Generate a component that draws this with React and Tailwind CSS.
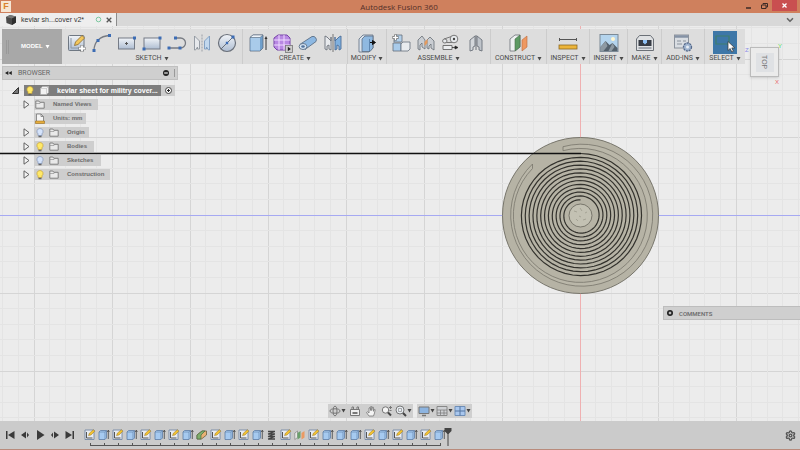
import { Fragment } from 'react'
import { ChevronDown, Settings } from 'lucide-react'

const BLUE = '#3c6cb4'

// ---------- toolbar glyphs, all on a 20x20 grid ----------
const GLYPHS = {
  newSketch: (
    <>
      <rect x="1.5" y="2.500" width="15.500" height="15" rx="1" fill="url(#metal)" stroke="#6f7883" />
      <path d="M4 5v10h8" fill="none" stroke="#8a96a6" />
      <path d="M7.500 12.500l1-3.500 6.500-6.500 2.600 2.500-6.600 6.500z" fill="#f3c75c" stroke="#8a6a2c" strokeWidth=".8" />
      <path d="M15 12v7M11.500 15.500h7" stroke="#777" strokeWidth="3" />
      <path d="M15 12.500v6M12 15.500h6" stroke="#fff" strokeWidth="1.800" />
    </>
  ),
  arc: (
    <>
      <path d="M2 17.500C2 9 8 3 17.500 2.500" fill="none" stroke="#777b82" strokeWidth="1.300" />
      <path d="M.5 16h3v3h-3zM4.500 6h3v3h-3zM16 1h3v3h-3z" fill={BLUE} />
    </>
  ),
  centerRect: (
    <>
      <rect x="1.500" y="5" width="16" height="11" fill="url(#metal)" stroke="#757b86" />
      <path d="M9.500 9v3M8 10.500h3" stroke="#555" />
      <path d="M16 3.500h3v3h-3z" fill={BLUE} />
    </>
  ),
  rect: (
    <>
      <rect x="2" y="5" width="16" height="11" fill="url(#metal)" stroke="#757b86" />
      <path d="M16.500 3.500h3v3h-3zM.5 14.500h3v3h-3z" fill={BLUE} />
    </>
  ),
  slot: (
    <>
      <path d="M9 5h4.500a4.800 4.800 0 010 10H2" fill="none" stroke="#777b82" strokeWidth="1.300" />
      <path d="M7 3.500h3v3H7zM.5 13.500h3v3h-3zM11.500 13.500h3v3h-3z" fill={BLUE} />
    </>
  ),
  mirrorSketch: (
    <>
      <path d="M2.500 3l5 5v8H5.500v-2l-2 3h-1z" fill="#e7e9ec" stroke="#8f959d" strokeWidth=".9" />
      <path d="M17.500 3l-5 5v8h2v-2l2 3h1z" fill="#c2d8ee" stroke="#7d9cc0" strokeWidth=".9" />
      <path d="M10 1.500v17" stroke="#9a9fa6" strokeDasharray="2 1" />
    </>
  ),
  circle: (
    <>
      <circle cx="10" cy="10" r="8.500" fill="url(#metal)" stroke="#6a707a" strokeWidth="1.200" />
      <path d="M4 16L16 4" stroke="#6a707a" />
      <path d="M14.500 2.500h3v3h-3zM8.800 8.800h2.400v2.400H8.800z" fill={BLUE} />
    </>
  ),
  extrude: (
    <>
      <path d="M2 4.500L5 2h10v13l-3 3H2z" fill="#6f9fcb" stroke="#5d6d80" strokeWidth=".8" />
      <path d="M2 4.500L5 2h10l-3 2.500z" fill="#eef3f8" stroke="#5d6d80" strokeWidth=".6" />
      <path d="M2.500 5h9.500v12.500H2.500z" fill="#a9cbea" />
      <path d="M18 17V5" stroke="#333" />
      <path d="M16.500 6L18 3l1.500 3z" fill="#333" />
    </>
  ),
  form: (
    <>
      <path d="M5 2h9l3 3v9l-3 3H4l-3-3V5z" fill="#b888e2" stroke="#7645a8" />
      <path d="M1 7h16M1 12h16M6 2v15M11 2v15" stroke="#efdcff" strokeWidth="1" />
      <rect x="12.500" y="12.500" width="7" height="7" fill="#ccc" stroke="#777" strokeWidth=".8" />
      <path d="M14.800 13.800l3 2.200-3 2.200z" fill="#222" />
    </>
  ),
  pipe: (
    <>
      <path d="M2.500 11L14 3.500a3.500 3.500 0 014 5L7 16.500z" fill="#8db8e2" stroke="#5c6f86" strokeWidth=".9" />
      <ellipse cx="5" cy="13.500" rx="3.900" ry="3" fill="#d6e5f4" stroke="#5c6f86" strokeWidth=".9" />
      <ellipse cx="5" cy="13.500" rx="1.800" ry="1.200" fill="#53739b" />
    </>
  ),
  mirror: (
    <>
      <path d="M2 3l2 1 4 4V4v13l-2-1v-4l-2 1v4l-2-1z" fill="#e8eaed" stroke="#6c727a" strokeWidth=".9" />
      <path d="M18 3l-2 1-4 4V4v13l2-1v-4l2 1v4l2-1z" fill="#7fb0df" stroke="#4c6e97" strokeWidth=".9" />
      <path d="M10 1v18" stroke="#777" />
    </>
  ),
  pressPull: (
    <>
      <path d="M2 6l4-4h10v13l-4 4H2z" fill="#dbe4ee" stroke="#5d6d80" strokeWidth=".8" />
      <path d="M5 6l3-3h8v12l-3 3.500H5z" fill="#8fb9e1" stroke="#5d6d80" strokeWidth=".8" />
      <path d="M12.500 6v12" stroke="#5078a4" strokeWidth=".8" />
      <path d="M13 9.500h3M15.500 7.500l3 2-3 2z" fill="#111" stroke="#111" />
    </>
  ),
  newComponent: (
    <>
      <path d="M2 10h8v8H2z" fill="#a9cbea" stroke="#66707c" strokeWidth=".8" />
      <path d="M10 11l2-2h7v7l-2 2h-7z" fill="#e8ebee" stroke="#66707c" strokeWidth=".8" />
      <path d="M3 4l2-2h6v7H3z" fill="#b3d0ea" stroke="#66707c" strokeWidth=".8" />
      <path d="M4.500 1.500v6M1.500 4.500h6" stroke="#666" strokeWidth="2.800" />
      <path d="M4.500 2v5M2 4.500h5" stroke="#fff" strokeWidth="1.400" />
    </>
  ),
  joint: (
    <>
      <path d="M2 7l4-4 3 4v9l-3-2v-4l-2 2v5l-2-1z" fill="#c9cdd2" stroke="#686e76" strokeWidth=".8" />
      <path d="M11 7l3-3 4 4v9l-3-2v-4l-2 2v3l-2-1z" fill="#c9cdd2" stroke="#686e76" strokeWidth=".8" />
      <path d="M8.500 9l3-3v4l-3 3z" fill="#e59a5c" />
    </>
  ),
  motion: (
    <>
      <path d="M3 6l9-3M3 9.500h9" stroke="#777" strokeWidth="1" />
      <circle cx="13" cy="6" r="3.800" fill="#e8ebee" stroke="#777" />
      <circle cx="13" cy="6" r="1.200" fill="#444" />
      <ellipse cx="3.800" cy="8" rx="2.200" ry="2" fill="#e8ebee" stroke="#777" />
      <path d="M2 12.500h9v4H2z" fill="#eceef0" stroke="#666" strokeWidth=".9" />
      <path d="M11 14.500h3M14 13l3 1.500-3 1.500z" fill="#222" stroke="#222" strokeWidth=".7" />
    </>
  ),
  rigid: (
    <>
      <path d="M4 7l5-4v10l-2 1v3l-3 1z" fill="#d4d7db" stroke="#6c727a" strokeWidth=".9" />
      <path d="M16 7l-5-4v10l2 1v3l3 1z" fill="#bfc4ca" stroke="#6c727a" strokeWidth=".9" />
      <path d="M10 2v15" stroke="#6c727a" />
    </>
  ),
  construct: (
    <>
      <path d="M1 6l5-4h5v12l-5 4H1z" fill="#eef0f1" stroke="#6b7077" strokeWidth=".8" />
      <path d="M6 6l5-4v12l-5 4z" fill="#5d9a63" stroke="#476d4b" strokeWidth=".6" />
      <path d="M13 7l5-4v11l-5 4z" fill="#ee9861" stroke="#bd6a3a" strokeWidth=".6" />
    </>
  ),
  inspect: (
    <>
      <path d="M1.500 6.500h17M1.500 5v3M18.500 5v3" stroke="#555" />
      <rect x="1" y="12" width="18" height="4" fill="#ecb53a" stroke="#8f6a22" strokeWidth=".8" />
    </>
  ),
  insert: (
    <>
      <rect x="1" y="1.500" width="18" height="17" fill="#b4d4ed" stroke="#7c8a96" />
      <circle cx="14" cy="6" r="2" fill="#fff6cf" />
      <path d="M1.500 14l5-6 4 4 3-2 5 5v3h-17z" fill="#54616c" />
      <path d="M6.500 8l2 5-4 5h-3v-4zM13.500 10l2 4-3 4h-3z" fill="#8d99a2" />
    </>
  ),
  make: (
    <>
      <path d="M1.500 6l3-3.500h11l3 3.500v11.500h-17z" fill="#dfe1e3" stroke="#6b7077" />
      <rect x="3.500" y="7" width="13" height="6" fill="#363b44" />
      <path d="M8 7h4v2.500l-2 2-2-2z" fill="#8fc0f4" />
      <path d="M3.500 15h13" stroke="#8a9098" strokeWidth="1.400" />
    </>
  ),
  addins: (
    <>
      <rect x="1.500" y="2" width="14" height="13" fill="#d9dde2" stroke="#8b929c" />
      <path d="M2 3.500h13" stroke="#8592a5" strokeWidth="2.500" />
      <path d="M4 8h4M4 11h5M10 8h3" stroke="#8a929c" />
      <circle cx="14.500" cy="14" r="4" fill="#9fb4d0" stroke="#56698a" strokeWidth="1.300" strokeDasharray="2 .9" />
      <circle cx="14.500" cy="14" r="1.500" fill="#e8edf4" />
    </>
  ),
  select: (
    <>
      <path d="M1 3h13v8H1z" fill="none" stroke="#3f7f6d" strokeWidth="1.200" />
      <path d="M13 8.500v9l2.200-2 1.600 3.500 1.600-.8-1.600-3.300h3z" fill="#fff" stroke="#333" strokeWidth=".7" />
    </>
  ),
}

const GROUPS = [
  { label: 'SKETCH', width: 'w-[180px]', tools: ['newSketch', 'arc', 'centerRect', 'rect', 'slot', 'mirrorSketch', 'circle'] },
  { label: 'CREATE', width: 'w-[105px]', tools: ['extrude', 'form', 'pipe', 'mirror'] },
  { label: 'MODIFY', width: 'w-[39px]', tools: ['pressPull'] },
  { label: 'ASSEMBLE', width: 'w-[104px]', tools: ['newComponent', 'joint', 'motion', 'rigid'] },
  { label: 'CONSTRUCT', width: 'w-[56px]', tools: ['construct'] },
  { label: 'INSPECT', width: 'w-[43px]', tools: ['inspect'] },
  { label: 'INSERT', width: 'w-[38px]', tools: ['insert'] },
  { label: 'MAKE', width: 'w-[34px]', tools: ['make'] },
  { label: 'ADD-INS', width: 'w-[43px]', tools: ['addins'] },
  { label: 'SELECT', width: 'w-[41px]', tools: ['select'] },
]

const TREE = [
  { label: 'Named Views', width: 'w-16', arrow: true, icon: 'folder' },
  { label: 'Units: mm', width: 'w-[52px]', icon: 'units' },
  { label: 'Origin', width: 'w-[55px]', arrow: true, bulb: 'off', icon: 'folder' },
  { label: 'Bodies', width: 'w-[60px]', arrow: true, bulb: 'on', icon: 'folder' },
  { label: 'Sketches', width: 'w-[67px]', arrow: true, bulb: 'off', icon: 'folder' },
  { label: 'Construction', width: 'w-[76px]', arrow: true, bulb: 'on', icon: 'folder' },
]

// s = sketch, e = extrude, f = fillet, c = coil, p = plane
const FEATURES = 'sesesesefsesecspseeesesese'.split('')
const FEATURE_NAMES = { s: 'Sketch', e: 'Extrude', f: 'Fillet', c: 'Coil', p: 'Plane' }

function Caret() {
  return (
    <svg width="5" height="4" viewBox="0 0 5 4" className="shrink-0" aria-hidden="true">
      <path d="M.5 0h4L2.500 3.500z" fill="currentColor" />
    </svg>
  )
}

function TitleBar() {
  return (
    <header className="flex h-[13px] shrink-0 items-start bg-[#cf805d]">
      <div className="flex flex-1 pl-px pt-px">
        <span className="flex h-[11px] w-[10px] items-center justify-center bg-[#f6e6d4] text-[9px] font-bold leading-none text-[#d9822f]">F</span>
      </div>
      <h1 className="font-['Open_Sans','Noto_Sans',sans-serif] text-[8px] leading-[13px] text-[#54302a]">Autodesk Fusion 360</h1>
      <div className="flex flex-1 justify-end pr-[3px] text-[#3b2a26]">
        <button aria-label="Minimize" className="flex h-[11px] w-[15px] items-center justify-center">
          <svg width="5" height="9" viewBox="0 0 5 9"><path d="M0 7h5" stroke="currentColor" strokeWidth="1.500" /></svg>
        </button>
        <button aria-label="Restore" className="flex h-[11px] w-4 items-center justify-center">
          <svg width="7" height="6" viewBox="0 0 7 6"><path d="M2 1.500V.5h4.500v3.500H5M.5 2H5v3.500H.5z" fill="none" stroke="currentColor" /></svg>
        </button>
        <button aria-label="Close" className="flex h-[11px] w-[25px] items-center justify-center bg-[#c94f50] text-white">
          <svg width="5" height="5" viewBox="0 0 5 5"><path d="M.5.5l4 4M4.500.5l-4 4" stroke="currentColor" strokeWidth="1.300" /></svg>
        </button>
      </div>
    </header>
  )
}

function TabStrip() {
  return (
    <div className="flex h-[13px] shrink-0 justify-between bg-[#d8d8d8]">
      <div className="flex w-[117px] items-center border-r border-[#8c8c8c] bg-[#eeeeee] pl-1.5">
        <svg width="10" height="10" viewBox="0 0 10 10" aria-hidden="true">
          <path d="M0 2l4-2 6 1.500v6L6 10 .5 8z" fill="#4a4a4a" />
          <path d="M0 2l4-2 6 1.500L6 3.500z" fill="#777" />
          <path d="M6 3.500l4-2v6L6 10z" fill="#2f2f2f" />
        </svg>
        <span className="ml-[5px] w-[70px] whitespace-nowrap text-[7px] leading-[15px] text-[#333]">kevlar sh...cover v2*</span>
        <svg width="7" height="7" viewBox="0 0 7 7" className="ml-1" aria-hidden="true">
          <circle cx="3.500" cy="3.500" r="2.300" fill="none" stroke="#7cc8a0" />
        </svg>
        <button aria-label="Close tab" className="ml-1 text-[#555]">
          <svg width="6" height="6" viewBox="0 0 6 6"><path d="M.7.7l4.600 4.600M5.300.7L.7 5.300" stroke="currentColor" strokeWidth="1.300" /></svg>
        </button>
      </div>
      <button aria-label="More tabs" className="flex w-[19px] items-center pl-1 text-[#666]">
        <ChevronDown size={10} strokeWidth={4} />
      </button>
    </div>
  )
}

function Toolbar() {
  return (
    <div className="flex h-[35px] w-fit bg-[#dddddd]">
      <button className="flex w-[60px] items-center gap-[2px] bg-[#a8a8a8] text-[6px] font-bold text-white">
        <span className="ml-1 mr-2.5 h-3.5 w-[3px] border-x border-[#999]" />
        MODEL
        <Caret />
      </button>
      {GROUPS.map((g, i) => (
        <div key={g.label} className={`${g.width} ${i ? 'border-l border-[#cccccc]' : ''} flex flex-col items-center pt-[2px]`}>
          <div className="flex gap-px">
            {g.tools.map(t => (
              <button key={t} aria-label={t} className={`${t === 'select' ? 'bg-[#3e77a8]' : ''} flex h-[23px] w-6 items-center justify-center`}>
                <svg width="20" height="20" viewBox="0 0 20 20">{GLYPHS[t]}</svg>
              </button>
            ))}
          </div>
          <button className="flex items-center gap-[2px] whitespace-nowrap font-['Roboto',sans-serif] text-[7px] leading-[9px] text-[#4a4a4a]">
            {g.label}
            <Caret />
          </button>
        </div>
      ))}
    </div>
  )
}

function Bulb({ on }) {
  return (
    <svg width="8" height="10" viewBox="0 0 8 10" className="shrink-0" aria-hidden="true">
      <path d="M4 .5a3 3 0 00-2 5.300V7.500h4V5.800A3 3 0 004 .5z" fill={on ? '#ffe968' : '#d5e3fa'} stroke={on ? '#c9a535' : '#8296bd'} strokeWidth=".7" />
      <path d="M2.500 8.500h3" stroke="#666" strokeWidth="1.500" />
    </svg>
  )
}

function TreeIcon({ kind }) {
  if (kind === 'units') {
    return (
      <svg width="10" height="11" viewBox="0 0 10 11" className="shrink-0" aria-hidden="true">
        <path d="M1.500 9V1H6l2.500 2.500V9" fill="#f5f5f5" stroke="#777" strokeWidth=".8" />
        <path d="M6 1v2.500h2.500" fill="none" stroke="#777" strokeWidth=".8" />
        <path d="M.5 8h9v2.500h-9z" fill="#e6ad3c" stroke="#9a6e1e" strokeWidth=".6" />
      </svg>
    )
  }
  return (
    <svg width="10" height="9" viewBox="0 0 10 9" className="shrink-0" aria-hidden="true">
      <path d="M.8 8.200V1h3l1 1.300h4.400v5.900z" fill="#e9e9e9" stroke="#777" strokeWidth=".9" />
      <path d="M1 3.500h4l1-1" fill="none" stroke="#888" strokeWidth=".6" />
    </svg>
  )
}

function Browser() {
  return (
    <section className="mt-[2px] text-[6px] font-bold text-[#6c6c6c]">
      <div className="flex h-3.5 w-44 items-center border border-[#c0c0c0] bg-[#cfcfcf] px-[2px]">
        <button aria-label="Collapse">
          <svg width="7" height="4" viewBox="0 0 7 4"><path d="M3.300 0v4L0 2zM6.800 0v4L3.500 2z" fill="#222" /></svg>
        </button>
        <h2 className="ml-1.5 flex-1 font-['Roboto',sans-serif] text-[7px] font-normal text-[#666]">BROWSER</h2>
        <button aria-label="Options">
          <svg width="6" height="6" viewBox="0 0 6 6"><circle cx="3" cy="3" r="3" fill="#222" /><path d="M1.200 3h3.600" stroke="#eee" strokeWidth="1.200" /></svg>
        </button>
        <span className="ml-[4px] h-2 w-[2px] border-r border-[#999]" />
      </div>
      <div className="mt-[5px] flex h-[11px] items-center pl-2.5">
        <svg width="7" height="7" viewBox="0 0 7 7" aria-hidden="true"><path d="M6.500.5v6h-6z" fill="#777" stroke="#333" /></svg>
        <div className="ml-[5px] flex h-[11px] w-[137px] items-center bg-[#7e7e7e] pl-[2px] text-white">
          <Bulb on />
          <svg width="9" height="9" viewBox="0 0 9 9" className="ml-[6px]" aria-hidden="true">
            <path d="M.5 2.500l2-2h6v6l-2 2h-6z" fill="#f2f2f2" stroke="#aaa" strokeWidth=".6" />
            <path d="M.5 2.500h6v6M6.500 2.500l2-2" fill="none" stroke="#bbb" strokeWidth=".6" />
          </svg>
          <span className="ml-2 whitespace-nowrap text-[7px] leading-[11px]">kevlar sheet for militry cover...</span>
        </div>
        <label className="flex h-[11px] w-3.5 items-center justify-center bg-[#cdcdcd]">
          <input type="radio" name="active" defaultChecked aria-label="Activate component"
            className="size-[7px] appearance-none rounded-full border border-[#444] bg-white bg-[radial-gradient(circle,#222_30%,#fff_40%)]" />
        </label>
      </div>
      <ul className="mt-[3px] flex flex-col gap-[3px] pl-5">
        {TREE.map(row => (
          <li key={row.label} className="flex h-[11px] items-center">
            <span className="w-3 pl-px">
              {row.arrow && (
                <svg width="7" height="9" viewBox="0 0 7 9" aria-hidden="true"><path d="M1 .8l5 3.700-5 3.700z" fill="#f4f4f4" stroke="#555" strokeWidth=".9" /></svg>
              )}
            </span>
            <div className={`${row.width} flex h-[11px] items-center bg-[#cecece] pl-px`}>
              {row.bulb && <span className="mr-[5px] pl-px"><Bulb on={row.bulb === 'on'} /></span>}
              <TreeIcon kind={row.icon} />
              <span className="ml-2 whitespace-nowrap leading-[11px]">{row.label}</span>
            </div>
          </li>
        ))}
      </ul>
    </section>
  )
}

const CX = 580.5
const CY = 215.5

// clockwise, from the top of the outer turn inwards
function spiralPath(r0, r1, turns) {
  const steps = turns * 48
  const pts = []
  for (let i = 0; i <= steps; i++) {
    const a = (i / 48) * 2 * Math.PI - Math.PI / 2
    const r = r0 + (r1 - r0) * (i / steps)
    pts.push(`${(CX + r * Math.cos(a)).toFixed(2)} ${(CY + r * Math.sin(a)).toFixed(2)}`)
  }
  return 'M' + pts.join('L')
}

function Model() {
  const lines = []
  for (let i = -38; i <= 15; i++) lines.push(i)
  return (
    <svg viewBox="0 26 800 395" preserveAspectRatio="xMidYMid slice" className="absolute inset-0 size-full" aria-hidden="true">
      <defs>
        <linearGradient id="metal" x1="0" y1="0" x2="0" y2="1">
          <stop offset="0" stopColor="#f1f4f8" />
          <stop offset="1" stopColor="#aebdd2" />
        </linearGradient>
      </defs>
      {lines.filter(i => i !== 0).map(i => (
        <Fragment key={i}>
          <path d={`M${Math.round(CX + i * 15.6) - 0.5} 26V421`} stroke={i % 5 ? '#e4e4e4' : '#d5d5d5'} />
          <path d={`M0 ${Math.round(CY + i * 15.6) - 0.5}H800`} stroke={i % 5 ? '#e4e4e4' : '#d5d5d5'} />
        </Fragment>
      ))}
      <path d={`M${CX} 26V421`} stroke="#efb0b1" />
      <path d={`M0 ${CY}H800`} stroke="#a6a9f2" />
      <circle cx={CX} cy={CY} r="78" fill="#b6b3a5" stroke="#77756b" />
      <path
        d="M563 146.700A71 71 0 11532.500 164V168.500A67 67 0 10563 150.700Z"
        fill="#bab7a9" stroke="#77756b" strokeWidth=".8"
      />
      <path d={spiralPath(62, 15.7, 12)} fill="none" stroke="#33322d" strokeWidth="1.200" />
      <circle cx={CX} cy={CY} r="11.500" fill="#c3c1b3" stroke="#6f6d63" strokeWidth=".9" />
      <path d="M574 211l3 1M580 208l2 3M585 213l2-1M576 219l2 2M583 220l3-1M579 216l2 1" stroke="#a5a395" />
      <path d="M0 153.500H581" stroke="#111" strokeWidth="1.500" />
    </svg>
  )
}

function ViewCube() {
  return (
    <div className="absolute right-[21px] top-[21px] text-[6px] leading-none">
      <button className="flex h-[30px] w-[29px] items-center justify-center border border-[#bbb] bg-[#ebebeb] shadow">
        <span className="flex h-[19px] w-[18px] items-center justify-center bg-[#dfe1e4] text-[7px] text-[#777] [writing-mode:vertical-rl]">TOP</span>
      </button>
      <span className="absolute -left-[5px] top-0 text-[#8c8ce6]">Z</span>
      <span className="absolute -right-[3px] -top-1 text-[#4fdc4f]">Y</span>
      <span className="absolute right-0 top-8 text-[#e86a6a]">X</span>
    </div>
  )
}

const NAV = [
  [
    { name: 'Orbit', caret: true, art: <><ellipse cx="6" cy="6" rx="5" ry="2.200" /><ellipse cx="6" cy="6" rx="2" ry="5" /></> },
    { name: 'Look at', art: <><path d="M1.500 4.500h9v6h-9zM3 4.500V2h1.500v2M8 4.500V2h1.500v2" fill="#eee" /><path d="M3.500 8h5" strokeWidth="2" /></> },
    { name: 'Pan', art: <path d="M4 11L1.500 7.500l1-.7L4 8V3l1-.5.7 3V1.500h1v4l.8-3.500 1 .3v4l.8-2 .9.4L9.500 8 8.500 11z" fill="#f4f4f4" strokeWidth=".8" /> },
    { name: 'Zoom', art: <><circle cx="4.500" cy="5" r="3.200" fill="#f4f4f4" /><path d="M7 7.500l3 3" strokeWidth="2" stroke="#444" /><path d="M9.500 1v3M8 2.500h3M8.500 5.500h2" /></> },
    { name: 'Zoom window', caret: true, art: <><circle cx="5" cy="5" r="4" fill="#e8edf2" /><path d="M3.500 3.500h3v3h-3z" strokeWidth=".6" /><path d="M8 8l3 3" strokeWidth="2" stroke="#444" /></> },
  ],
  [
    { name: 'Display settings', caret: true, art: <><path d="M1 2h10v6.500H1z" fill="#8db4e0" /><path d="M4 10.500h4" strokeWidth="1.500" /></> },
    { name: 'Grid and snaps', caret: true, art: <><path d="M1 1.500h10v9H1z" fill="#cfd1d4" stroke="#888" /><path d="M1 5h10M1 8h10M4.500 5v5M8 5v5" strokeWidth=".7" /></> },
    { name: 'Viewports', caret: true, art: <><path d="M1 1.500h10v9H1z" fill="#a9c7ee" stroke="#6f8fb8" /><path d="M6 1.500v9M1 6h10" stroke="#55749f" /></> },
  ],
]

function NavBar() {
  return (
    <nav className="absolute bottom-[3px] left-1/2 flex -translate-x-1/2 gap-1">
      {NAV.map((group, i) => (
        <div key={i} className="flex h-3.5 items-center gap-px bg-[#cfcfcf] px-px text-[#444]">
          {group.map(item => (
            <button key={item.name} aria-label={item.name} className={`${item.caret ? 'w-[17px]' : 'w-[15px]'} flex items-center justify-center`}>
              <svg width="12" height="12" viewBox="0 0 12 12" fill="none" stroke="#777" className="shrink-0">{item.art}</svg>
              {item.caret && <Caret />}
            </button>
          ))}
        </div>
      ))}
    </nav>
  )
}

const FEATURE_ART = {
  s: (
    <>
      <path d="M1 1h9v9.500H1z" fill="#e8ecf2" stroke="#7488a5" strokeWidth=".9" />
      <path d="M2.500 3v6h6" fill="none" stroke="#444" strokeWidth=".9" />
      <path d="M4.500 6.500l1-2.500L9.500.7l1.300 1.500L7 6z" fill="#f2c333" stroke="#9a7420" strokeWidth=".5" />
    </>
  ),
  e: (
    <>
      <path d="M1 3l1.500-1.500h6V9L7 10.500H1z" fill="#a6caf0" stroke="#5e7ea6" strokeWidth=".8" />
      <path d="M1 3h6v7M7 3l1.500-1.500" fill="none" stroke="#5e7ea6" strokeWidth=".6" />
      <path d="M10.300 10V2M9.300 3l1-2 1 2" fill="none" stroke="#444" strokeWidth=".8" />
    </>
  ),
  f: (
    <>
      <path d="M1 6l5-4h4.500v4l-5 4H1z" fill="#e9b173" stroke="#6c6040" strokeWidth=".8" />
      <path d="M1 6l5-4h3L5 6v4H1z" fill="#7fae6c" stroke="#4c6b40" strokeWidth=".7" />
    </>
  ),
  c: <path d="M2 2.500h7M2 5h7M2 7.500h7M2 10h7M9 2.500L2 5M9 5L2 7.500M9 7.500L2 10" fill="none" stroke="#444" strokeWidth="1.300" />,
  p: (
    <>
      <path d="M.8 4L3.500 2v6.500L.8 10.500z" fill="#e8e8e8" stroke="#777" strokeWidth=".6" />
      <path d="M3.500 4L6.500 2v6.500l-3 2z" fill="#6aa06c" />
      <path d="M7.500 4l3-2v6.500l-3 2z" fill="#eb9a63" />
    </>
  ),
}

const PLAYBACK = [
  { name: 'Go to start', d: 'M1 1h1.500v8H1zM9.500 1v8L3 5z' },
  { name: 'Step back', d: 'M6 1.500v7L1 5zM7 2.500L9 5 7 7.500z' },
  { name: 'Play', d: 'M2 0l7.500 5L2 10z' },
  { name: 'Step forward', d: 'M4 1.500v7L9 5zM3 2.500L1 5l2 2.500z' },
  { name: 'Go to end', d: 'M7.500 1H9v8H7.500zM.5 1v8L7 5z' },
]

function Timeline() {
  const last = FEATURES.length * 14 - 7
  return (
    <footer className="flex h-[29px] shrink-0 items-start justify-between border-b border-[#b98b7c] bg-[#cbcbcb] pl-[2px] pr-1">
      <div className="flex">
        <div className="flex h-7">
          {PLAYBACK.map(b => (
            <button key={b.name} aria-label={b.name} className="flex w-[15px] items-center justify-center">
              <svg width="10" height="10" viewBox="0 0 10 10"><path d={b.d} fill="#3a3a3a" /></svg>
            </button>
          ))}
        </div>
        <div className="ml-1.5 pt-2">
          <div className="flex">
            {FEATURES.map((f, i) => (
              <button key={i} aria-label={`${FEATURE_NAMES[f]} ${i + 1}`} className="flex w-3.5 justify-center">
                <svg width="12" height="12" viewBox="0 0 12 12">{FEATURE_ART[f]}</svg>
              </button>
            ))}
          </div>
          <svg width={last + 7} height="5" viewBox={`0 0 ${last + 7} 5`} className="mt-px block" aria-hidden="true">
            <path d={`M7 3.500H${last + 1}` + FEATURES.map((_, i) => `M${7 + i * 14}.5 1v3`).join('')} stroke="#555" fill="none" />
          </svg>
        </div>
        <svg width="8" height="20" viewBox="0 0 8 20" className="-ml-[3px] mt-1.5" aria-hidden="true">
          <path d="M.5 1h7v3L4.500 7h-1l-3-3z" fill="#444" />
          <path d="M4 6v13" stroke="#444" />
        </svg>
      </div>
      <button aria-label="Preferences" className="flex h-7 w-3 items-center justify-center text-[#555]">
        <Settings size={11} strokeWidth={3} />
      </button>
    </footer>
  )
}

export default function App() {
  return (
    <div className="flex min-h-screen flex-col overflow-hidden bg-[#ececec] font-['Liberation_Sans',Arial,sans-serif]">
      <TitleBar />
      <TabStrip />
      <main className="relative flex-1">
        <Model />
        <div className="relative pl-[2px] pt-[3px]">
          <Toolbar />
          <Browser />
        </div>
        <ViewCube />
        <button className="absolute bottom-[101px] right-0 flex h-3.5 w-[137px] items-center border border-r-0 border-[#bdbdbd] bg-[#cfcfcf] pl-[3px] font-['Roboto',sans-serif] text-[6px] font-medium text-[#666]">
          <svg width="6" height="6" viewBox="0 0 6 6" aria-hidden="true"><circle cx="3" cy="3" r="3" fill="#222" /><path d="M3 1.700v2.600M1.700 3h2.600" stroke="#eee" /></svg>
          <span className="ml-1.5">COMMENTS</span>
        </button>
        <NavBar />
      </main>
      <Timeline />
    </div>
  )
}
